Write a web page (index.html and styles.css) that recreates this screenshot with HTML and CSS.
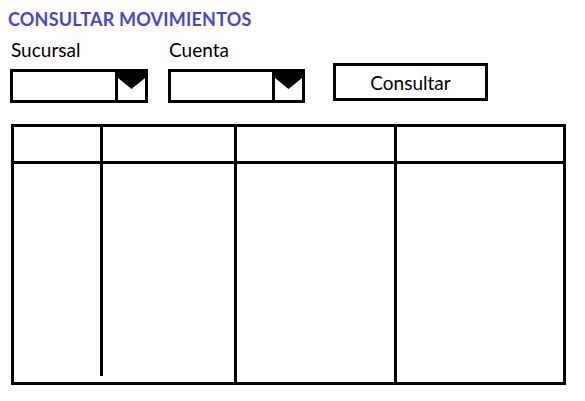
FILE: index.html
```html
<!DOCTYPE HTML>
<html>

<head>
    <meta charset="utf-8">
    <title>Consultar movimientos</title>
    <link rel="stylesheet" href="styles.css">
</head>

<body>
    <div class="page">
        <h1 class="titulo">CONSULTAR MOVIMIENTOS</h1>

        <div class="filtros">
            <div class="campo campo-sucursal">
                <label class="etiqueta">Sucursal</label>
                <div class="combo">
                    <div class="combo-valor"></div>
                    <div class="combo-flecha">
                        <svg width="27" height="28" viewBox="0 0 27 28"><polygon points="0,0 27,0 27,6 13.5,17 0,6" fill="#000"/></svg>
                    </div>
                </div>
            </div>
            <div class="campo campo-cuenta">
                <label class="etiqueta">Cuenta</label>
                <div class="combo">
                    <div class="combo-valor"></div>
                    <div class="combo-flecha">
                        <svg width="27" height="28" viewBox="0 0 27 28"><polygon points="0,0 27,0 27,6 13.5,17 0,6" fill="#000"/></svg>
                    </div>
                </div>
            </div>
            <button class="boton">Consultar</button>
        </div>

        <div class="tabla">
            <div class="col col-1"><div class="th"></div><div class="td"></div></div>
            <div class="col col-2"><div class="th"></div><div class="td"></div></div>
            <div class="col col-3"><div class="th"></div><div class="td"></div></div>
            <div class="col col-4"><div class="th"></div><div class="td"></div></div>
        </div>
    </div>
</body>

</html>
```

FILE: styles.css
```css
html, body {
	background: #ffffff;
	padding: 0;
	border: 0;
	margin: 0;
	height: 100%;
}

body {
    font-family: Lato, "Liberation Sans", sans-serif;
    color: #000;
}

.page {
    padding-top: 8px;
}

.titulo {
    margin: 0 0 0 8px;
    font-size: 18px;
    font-weight: bold;
    letter-spacing: 0.2px;
    color: #4646d6;
    line-height: normal;
}

/* filtros */
.filtros {
    display: flex;
    align-items: flex-end;
    padding-left: 10px;
    margin-top: 8px;
}

.campo {
    display: flex;
    flex-direction: column;
}
.campo-sucursal {
    width: 138px;
}
.campo-cuenta {
    width: 137px;
    margin-left: 20px;
}

.etiqueta {
    font-size: 19px;
    line-height: normal;
    padding-left: 1px;
    margin-bottom: 8px;
}

.combo {
    display: flex;
    height: 34px;
    box-sizing: border-box;
    border: 3px solid #000;
}
.combo-valor {
    flex: 1;
}
.combo-flecha {
    width: 27px;
    border-left: 3px solid #000;
}
.combo-flecha svg {
    display: block;
}

.boton {
    width: 155px;
    height: 38px;
    margin-left: 28px;
    margin-bottom: 2px;
    box-sizing: border-box;
    border: 3px solid #000;
    background: #fff;
    font-family: Lato, "Liberation Sans", sans-serif;
    font-size: 19px;
    color: #000;
    padding: 0;
}

/* tabla */
.tabla {
    display: flex;
    width: 555px;
    height: 261px;
    box-sizing: border-box;
    margin: 21px 0 0 11px;
    border: 3px solid #000;
}

.col {
    display: flex;
    flex-direction: column;
}
.col-1 { width: 89px; }
.col-2 { width: 131px; }
.col-3 { width: 157px; border-left: 3px solid #000; }
.col-4 { width: 166px; border-left: 3px solid #000; }

.th {
    height: 34px;
    border-bottom: 3px solid #000;
}
.td {
    flex: 1;
}

/* la linea de la primera columna no llega al borde de abajo */
.col-1 .th,
.col-1 .td {
    border-right: 3px solid #000;
}
.col-1 .td {
    margin-bottom: 6px;
}
```
